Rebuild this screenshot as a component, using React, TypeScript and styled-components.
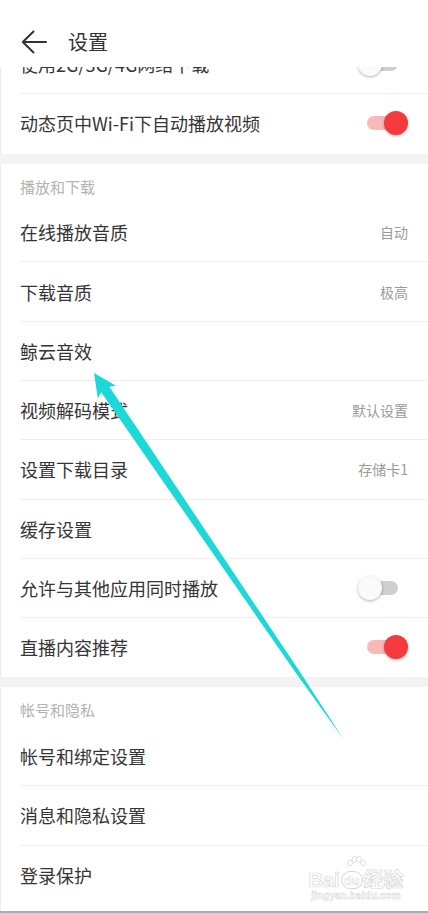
import React from "react";
import styled, { createGlobalStyle } from "styled-components";

const GlobalStyle = createGlobalStyle`
  html, body { margin: 0; padding: 0; background: #fff; }
  body { font-family: "Noto Sans CJK SC", "Noto Sans", sans-serif; }
  * { box-sizing: border-box; }
`;

const Page = styled.div`
  position: relative;
  width: 428px;
  height: 913px;
  overflow: hidden;
  background: #fff;
  display: flex;
  flex-direction: column;
  box-shadow: inset 1px 0 0 #ececec;
`;

const Header = styled.header`
  position: relative;
  z-index: 2;
  flex: none;
  height: 67px;
  padding-top: 16px;
  display: flex;
  align-items: center;
  background: #fff;
`;

const BackIcon = styled.svg`
  margin-left: 21px;
  flex: none;
`;

const Title = styled.h1`
  margin: 0 0 0 21px;
  font-size: 20px;
  font-weight: 400;
  color: #333;
  line-height: 24px;
`;

const List = styled.div`
  margin-top: -32px;
  display: flex;
  flex-direction: column;
`;

const Row = styled.div<{ $divider?: boolean }>`
  flex: none;
  height: 59.3px;
  margin-left: 20px;
  padding-right: 20px;
  display: flex;
  align-items: center;
  border-bottom: 1px solid ${(p) => (p.$divider ? "#efefef" : "transparent")};
`;

const Label = styled.span`
  font-size: 18px;
  color: #353535;
  line-height: 24px;
  white-space: nowrap;
`;

const Value = styled.span`
  margin-left: auto;
  font-size: 14px;
  color: #9a9a9a;
  line-height: 20px;
`;

const Band = styled.div`
  flex: none;
  height: 10px;
  background: #f3f3f3;
`;

const SectionTitle = styled.div`
  flex: none;
  height: 39.5px;
  padding: 14px 20px 0;
  font-size: 15px;
  line-height: 18px;
  color: #b2b2b2;
`;

const SwitchBox = styled.div`
  position: relative;
  flex: none;
  margin-left: auto;
  width: 50px;
  height: 24px;
`;

const Track = styled.div<{ $on: boolean }>`
  position: absolute;
  left: 9px;
  top: 5px;
  width: 31px;
  height: 14px;
  border-radius: 7px;
  background: ${(p) => (p.$on ? "#f9b9b9" : "#cfcfcf")};
`;

const Knob = styled.div<{ $on: boolean }>`
  position: absolute;
  top: 0;
  left: ${(p) => (p.$on ? "26px" : "0")};
  width: 24px;
  height: 24px;
  border-radius: 50%;
  background: ${(p) => (p.$on ? "#f43a3a" : "#fafafa")};
  box-shadow: 0 1px 3px rgba(0, 0, 0, 0.3);
`;

const Spacer = styled.div`
  flex: 1;
`;

const BottomLine = styled.div`
  flex: none;
  height: 2px;
  background: #a3adb7;
`;

const Overlay = styled.svg`
  position: absolute;
  left: 0;
  top: 0;
  pointer-events: none;
  z-index: 3;
`;

const Watermark = styled.div`
  position: absolute;
  left: 308px;
  top: 856px;
  width: 96px;
  display: flex;
  flex-direction: column;
  align-items: center;
  pointer-events: none;
  z-index: 3;
`;

const MarkLine = styled.div`
  display: flex;
  align-items: center;
  gap: 1px;
  font-family: "Liberation Sans", "Noto Sans CJK SC", sans-serif;
  font-size: 20px;
  line-height: 20px;
  font-weight: 700;
  color: #fff;
  -webkit-text-stroke: 0.7px #d6d6d6;
`;

const DuBadge = styled.span`
  display: inline-flex;
  align-items: center;
  justify-content: center;
  width: 22px;
  height: 18px;
  border-radius: 9px;
  border: 1px solid #d6d6d6;
  font-size: 13px;
  line-height: 13px;
  -webkit-text-stroke: 0.5px #d6d6d6;
`;

const MarkSub = styled.div`
  font-family: "Liberation Sans", sans-serif;
  font-size: 10px;
  line-height: 12px;
  font-weight: 700;
  color: #fff;
  -webkit-text-stroke: 0.5px #d6d6d6;
  letter-spacing: 0.1px;
`;

const Switch = ({ on }: { on: boolean }) => (
  <SwitchBox>
    <Track $on={on} />
    <Knob $on={on} />
  </SwitchBox>
);

type Item = { label: string; value?: string; toggle?: boolean };

const top: Item[] = [
  { label: "使用2G/3G/4G网络下载", toggle: false },
  { label: "动态页中Wi-Fi下自动播放视频", toggle: true },
];

const play: Item[] = [
  { label: "在线播放音质", value: "自动" },
  { label: "下载音质", value: "极高" },
  { label: "鲸云音效" },
  { label: "视频解码模式", value: "默认设置" },
  { label: "设置下载目录", value: "存储卡1" },
  { label: "缓存设置" },
  { label: "允许与其他应用同时播放", toggle: false },
  { label: "直播内容推荐", toggle: true },
];

const account: Item[] = [
  { label: "帐号和绑定设置" },
  { label: "消息和隐私设置" },
  { label: "登录保护" },
];

const Rows = ({ items }: { items: Item[] }) => (
  <>
    {items.map((it, i) => (
      <Row key={it.label} $divider={i < items.length - 1}>
        <Label>{it.label}</Label>
        {it.value && <Value>{it.value}</Value>}
        {it.toggle !== undefined && <Switch on={it.toggle} />}
      </Row>
    ))}
  </>
);

export default function App() {
  return (
    <>
      <GlobalStyle />
      <Page>
        <Header>
          <BackIcon width="26" height="24" viewBox="0 0 26 24" fill="none">
            <path
              d="M25 12H2.5M12.5 1.5L1.8 12L12.5 22.5"
              stroke="#333"
              strokeWidth="2"
              strokeLinecap="round"
              strokeLinejoin="round"
            />
          </BackIcon>
          <Title>设置</Title>
        </Header>
        <List>
          <Rows items={top} />
          <Band />
          <SectionTitle>播放和下载</SectionTitle>
          <Rows items={play} />
          <Band />
          <SectionTitle>帐号和隐私</SectionTitle>
          <Rows items={account} />
        </List>
        <Spacer />
        <BottomLine />
        <Watermark>
          <svg width="24" height="14" viewBox="0 0 24 14" fill="#fff" stroke="#d6d6d6" strokeWidth="0.8">
            <ellipse cx="6" cy="7" rx="2.4" ry="3" />
            <ellipse cx="10.5" cy="3.5" rx="2.4" ry="3" />
            <ellipse cx="15" cy="3.5" rx="2.4" ry="3" />
            <ellipse cx="19" cy="7" rx="2.4" ry="3" />
          </svg>
          <MarkLine>
            Bai<DuBadge>du</DuBadge>经验
          </MarkLine>
          <MarkSub>jingyan.baidu.com</MarkSub>
        </Watermark>
        <Overlay width="428" height="913" viewBox="0 0 428 913">
          <polygon
            points="94,373 116,385.8 109.4,386.7 298.4,669.6 344,740 295,671.8 101.2,392.3 97.8,398.2"
            fill="#1cd8d8"
          />
        </Overlay>
      </Page>
    </>
  );
}
